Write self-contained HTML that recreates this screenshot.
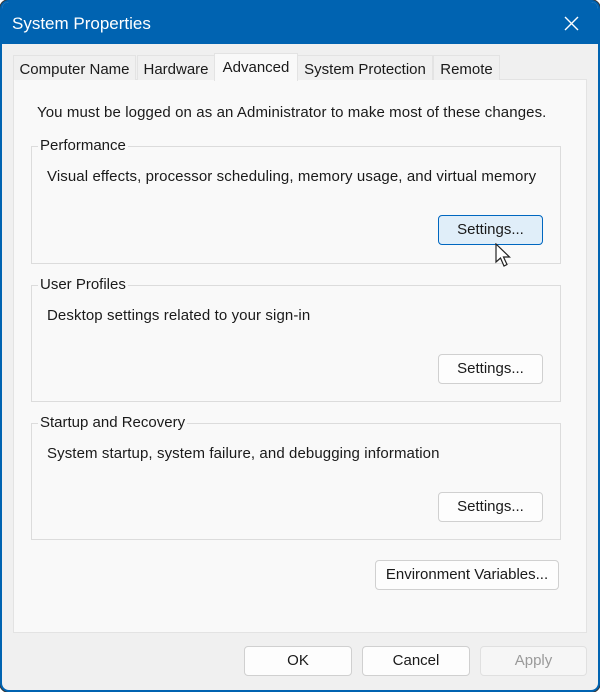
<!DOCTYPE html><html><head><style>
*{box-sizing:border-box;margin:0;padding:0}
body{width:600px;height:692px;background:#fff;font-family:"Liberation Sans",sans-serif;font-size:15px;color:#1a1a1a;position:relative;overflow:hidden}
.win{position:absolute;left:0;top:0;width:600px;height:692px;border:2px solid #0063b1;border-radius:9px;background:#f0f0f0;box-shadow:0 0 0 1px #333;overflow:hidden}
.title{position:absolute;left:0;top:0;width:100%;height:42px;background:#0063b1;color:#fff;font-size:17px}
.title span{position:absolute;left:10px;top:12px}
.a{position:absolute;white-space:nowrap;letter-spacing:0.1px}
.tab{position:absolute;top:53px;height:25px;background:#f0f0f0;border:1px solid #e3e3e3;border-bottom:none;padding:5px 0 0 0;text-align:center}
.panel{position:absolute;left:11px;top:77px;width:574px;height:554px;background:#f9f9f9;border:1px solid #e3e3e3}
.grp{position:absolute;left:29px;width:530px;border:1px solid #dcdcdc}
.lg{position:absolute;left:6px;top:-10px;background:#f9f9f9;padding:0 2px}
.btn{position:absolute;height:30px;border:1px solid #d0d0d0;border-radius:4px;background:#fdfdfd;text-align:center;line-height:28px}
</style></head><body><div class="win">
<div class="title"><span>System Properties</span>
<svg style="position:absolute;left:562px;top:14px" width="15" height="15"><path d="M1 1L14 14M14 1L1 14" stroke="#fff" stroke-width="1.4"/></svg></div>
<div class="panel"></div>
<div class="tab" style="left:11px;width:123px">Computer Name</div>
<div class="tab" style="left:135px;width:78px">Hardware</div>
<div class="tab" style="left:212px;width:84px;top:51px;height:28px;background:#f9f9f9;padding-top:5px">Advanced</div>
<div class="tab" style="left:295px;width:136px">System Protection</div>
<div class="tab" style="left:431px;width:67px">Remote</div>
<div class="a" style="left:35px;top:102px">You must be logged on as an Administrator to make most of these changes.</div>
<div class="grp" style="top:144px;height:118px"><div class="lg">Performance</div>
<div class="a" style="left:15px;top:21px">Visual effects, processor scheduling, memory usage, and virtual memory</div></div>
<div class="grp" style="top:283px;height:117px"><div class="lg">User Profiles</div>
<div class="a" style="left:15px;top:21px">Desktop settings related to your sign-in</div></div>
<div class="grp" style="top:421px;height:117px"><div class="lg">Startup and Recovery</div>
<div class="a" style="left:15px;top:21px">System startup, system failure, and debugging information</div></div>
<div class="btn" style="left:436px;top:213px;width:105px;background:#e0eef9;border:1px solid #0067c0">Settings...</div>
<div class="btn" style="left:436px;top:352px;width:105px">Settings...</div>
<div class="btn" style="left:436px;top:490px;width:105px">Settings...</div>
<div class="btn" style="left:373px;top:558px;width:184px">Environment Variables...</div>
<div class="btn" style="left:242px;top:644px;width:108px">OK</div>
<div class="btn" style="left:360px;top:644px;width:108px">Cancel</div>
<div class="btn" style="left:478px;top:644px;width:107px;color:#9a9a9a;border-color:#e0e0e0;background:#f6f6f6">Apply</div>
<svg style="position:absolute;left:493px;top:241px" width="20" height="28"><path d="M1 1L1 19L5.5 15L9 23L12 21.5L8.5 14L14.5 14Z" fill="#fff" stroke="#222" stroke-width="1.2"/></svg>
</div></body></html>
